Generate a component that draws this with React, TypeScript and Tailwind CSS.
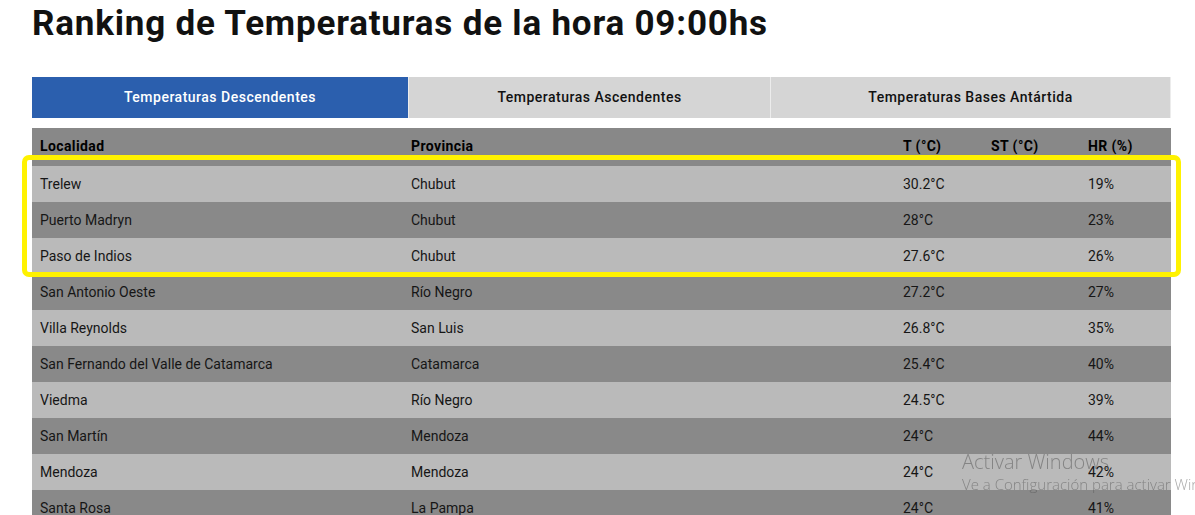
import React from "react";

const rows = [
  ["Trelew", "Chubut", "30.2°C", "", "19%"],
  ["Puerto Madryn", "Chubut", "28°C", "", "23%"],
  ["Paso de Indios", "Chubut", "27.6°C", "", "26%"],
  ["San Antonio Oeste", "Río Negro", "27.2°C", "", "27%"],
  ["Villa Reynolds", "San Luis", "26.8°C", "", "35%"],
  ["San Fernando del Valle de Catamarca", "Catamarca", "25.4°C", "", "40%"],
  ["Viedma", "Río Negro", "24.5°C", "", "39%"],
  ["San Martín", "Mendoza", "24°C", "", "44%"],
  ["Mendoza", "Mendoza", "24°C", "", "42%"],
  ["Santa Rosa", "La Pampa", "24°C", "", "41%"],
];

export default function App() {
  return (
    <div
      className="min-h-screen bg-white text-[#111]"
      style={{ fontFamily: "Roboto, 'Liberation Sans', sans-serif" }}
    >
      <div className="pl-[32px] pr-[24px]">
        <h1 className="pt-[4px] text-[35px] leading-[40px] font-bold tracking-[0.8px] text-[#111] whitespace-nowrap">
          Ranking de Temperaturas de la hora 09:00hs
        </h1>

        <div className="mt-[33px] w-[1139px] grid grid-cols-[376px_362px_1fr] h-[41px] text-[14px] font-medium tracking-[0.5px]">
          <div className="bg-[#2b5fae] text-white flex items-center justify-center">
            Temperaturas Descendentes
          </div>
          <div className="bg-[#d5d5d5] border-l border-[#ececec] flex items-center justify-center">
            Temperaturas Ascendentes
          </div>
          <div className="bg-[#d5d5d5] border-l border-r border-[#ececec] flex items-center justify-center">
            Temperaturas Bases Antártida
          </div>
        </div>

        <div className="relative mt-[10px] w-[1139px] text-[14px]">
          <div className="grid grid-cols-[371px_492px_88px_97px_1fr] h-[38px] items-center bg-[#888888] font-bold tracking-[0.4px] text-black">
            <div className="pl-[8px] pb-[1px]">Localidad</div>
            <div className="pl-[8px] pb-[1px]">Provincia</div>
            <div className="pl-[8px] pb-[1px]">T (°C)</div>
            <div className="pl-[8px] pb-[1px]">ST (°C)</div>
            <div className="pl-[8px] pb-[1px]">HR (%)</div>
          </div>
          {rows.map((r, i) => (
            <div
              key={i}
              className={
                "grid grid-cols-[371px_492px_88px_97px_1fr] h-[36px] items-center text-[#161616] " +
                (i % 2 === 0 ? "bg-[#bababa]" : "bg-[#898989]")
              }
            >
              {r.map((c, j) => (
                <div key={j} className="pl-[8px] whitespace-nowrap">
                  {c}
                </div>
              ))}
            </div>
          ))}

          <div className="absolute left-[-10px] top-[27px] w-[1159px] h-[122px] border-[5px] border-[#fff200] rounded-[7px] pointer-events-none" />
        </div>
      </div>

      <div
        className="fixed left-[962px] top-[449px] text-[rgba(80,80,80,0.5)] whitespace-nowrap pointer-events-none"
        style={{ fontFamily: "'Open Sans', 'Noto Sans', sans-serif" }}
      >
        <div className="text-[20px] leading-[26px] font-light">Activar Windows</div>
        <div className="text-[15px] leading-[18px] font-light">Ve a Configuración para activar Windows.</div>
      </div>
    </div>
  );
}
